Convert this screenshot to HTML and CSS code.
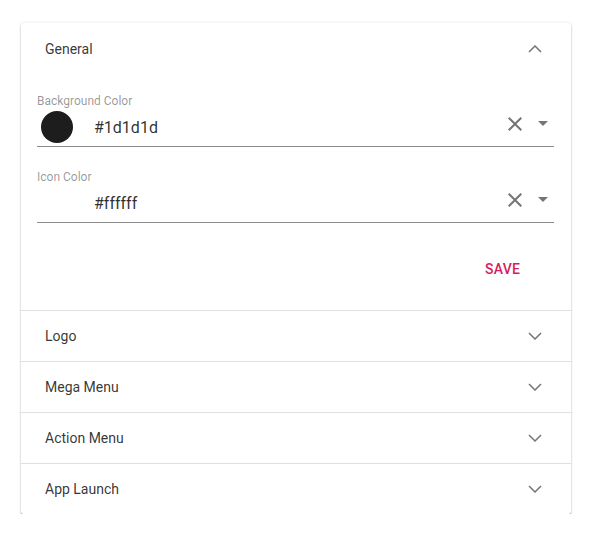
FILE: index.html
```html
<!DOCTYPE html>
<html>
<head>
<meta charset="utf-8">
<link rel="stylesheet" href="styles.css">
</head>
<body>
<div class="page">
  <div class="card">
    <section class="panel expanded">
      <div class="header header-first">
        <span class="title">General</span>
        <svg class="chev" width="14" height="8" viewBox="0 0 14 8"><polyline points="1,7 7,1 13,7" fill="none" stroke="#757575" stroke-width="1.5"/></svg>
      </div>
      <div class="body">
        <div class="field">
          <div class="label">Background Color</div>
          <div class="row">
            <span class="swatch dark"></span>
            <span class="value">#1d1d1d</span>
            <span class="icons">
              <svg class="close" width="24" height="24" viewBox="0 0 24 24"><path d="M19 6.41L17.59 5 12 10.59 6.41 5 5 6.41 10.59 12 5 17.59 6.41 19 12 13.41 17.59 19 19 17.59 13.41 12z" fill="#757575"/></svg>
              <span class="arrow"></span>
            </span>
          </div>
        </div>
        <div class="field field-second">
          <div class="label">Icon Color</div>
          <div class="row">
            <span class="swatch light"></span>
            <span class="value">#ffffff</span>
            <span class="icons">
              <svg class="close" width="24" height="24" viewBox="0 0 24 24"><path d="M19 6.41L17.59 5 12 10.59 6.41 5 5 6.41 10.59 12 5 17.59 6.41 19 12 13.41 17.59 19 19 17.59 13.41 12z" fill="#757575"/></svg>
              <span class="arrow"></span>
            </span>
          </div>
        </div>
        <div class="actions">
          <button class="save">SAVE</button>
        </div>
      </div>
    </section>
    <section class="panel">
      <div class="header">
        <span class="title">Logo</span>
        <svg class="chev" width="14" height="8" viewBox="0 0 14 8"><polyline points="1,1 7,7 13,1" fill="none" stroke="#757575" stroke-width="1.5"/></svg>
      </div>
    </section>
    <section class="panel">
      <div class="header">
        <span class="title">Mega Menu</span>
        <svg class="chev" width="14" height="8" viewBox="0 0 14 8"><polyline points="1,1 7,7 13,1" fill="none" stroke="#757575" stroke-width="1.5"/></svg>
      </div>
    </section>
    <section class="panel">
      <div class="header">
        <span class="title">Action Menu</span>
        <svg class="chev" width="14" height="8" viewBox="0 0 14 8"><polyline points="1,1 7,7 13,1" fill="none" stroke="#757575" stroke-width="1.5"/></svg>
      </div>
    </section>
    <section class="panel">
      <div class="header">
        <span class="title">App Launch</span>
        <svg class="chev" width="14" height="8" viewBox="0 0 14 8"><polyline points="1,1 7,7 13,1" fill="none" stroke="#757575" stroke-width="1.5"/></svg>
      </div>
    </section>
  </div>
</div>
</body>
</html>
```

FILE: styles.css
```css
html, body {
  margin: 0;
  padding: 0;
  background: #ffffff;
  font-family: Roboto, "Liberation Sans", sans-serif;
  color: rgba(0, 0, 0, 0.87);
}

.page {
  padding: 23px 0 0 21px;
}

.card {
  width: 550px;
  background: #fff;
  border-radius: 2px;
  box-shadow: 0 1px 1px 0 rgba(0,0,0,.38), 0 2px 2px 0 rgba(0,0,0,.1), 0 0 3px 0 rgba(0,0,0,.12);
}

.panel + .panel {
  border-top: 1px solid #e0e0e0;
}

.header {
  height: 50px;
  display: flex;
  align-items: center;
  padding: 0 29px 0 24px;
  box-sizing: border-box;
}

.header-first {
  height: 52px;
}

.title {
  flex: 1;
  font-size: 14px;
  color: rgba(0, 0, 0, 0.8);
}

.chev {
  display: block;
}

.body {
  padding: 19px 17px 23px 16px;
}

.field {
  display: flex;
  flex-direction: column;
}

.field-second {
  margin-top: 23px;
}

.label {
  font-size: 12px;
  line-height: 15px;
  color: rgba(0, 0, 0, 0.42);
}

.row {
  height: 38px;
  display: flex;
  align-items: center;
  border-bottom: 1px solid #8c8c8c;
  box-sizing: border-box;
  padding-bottom: 1px;
}

.swatch {
  width: 32px;
  height: 32px;
  border-radius: 50%;
  margin-left: 4px;
  flex: none;
}

.swatch.dark {
  background: #1d1d1d;
}

.swatch.light {
  background: #ffffff;
}

.value {
  flex: 1;
  margin-left: 21px;
  font-size: 16px;
  color: rgba(0, 0, 0, 0.82);
}

.icons {
  display: flex;
  align-items: center;
  margin-bottom: 7px;
  margin-right: 6px;
}

.close {
  display: block;
}

.arrow {
  width: 0;
  height: 0;
  margin-left: 11px;
  border-left: 5px solid transparent;
  border-right: 5px solid transparent;
  border-top: 5px solid rgba(0, 0, 0, 0.54);
}

.actions {
  display: flex;
  justify-content: flex-end;
  margin-top: 28px;
  padding-right: 18px;
}

.save {
  height: 36px;
  padding: 0 16px;
  border: none;
  background: transparent;
  font-family: Roboto, "Liberation Sans", sans-serif;
  font-size: 14px;
  font-weight: 500;
  color: #d81b60;
  letter-spacing: 0.2px;
}
```
